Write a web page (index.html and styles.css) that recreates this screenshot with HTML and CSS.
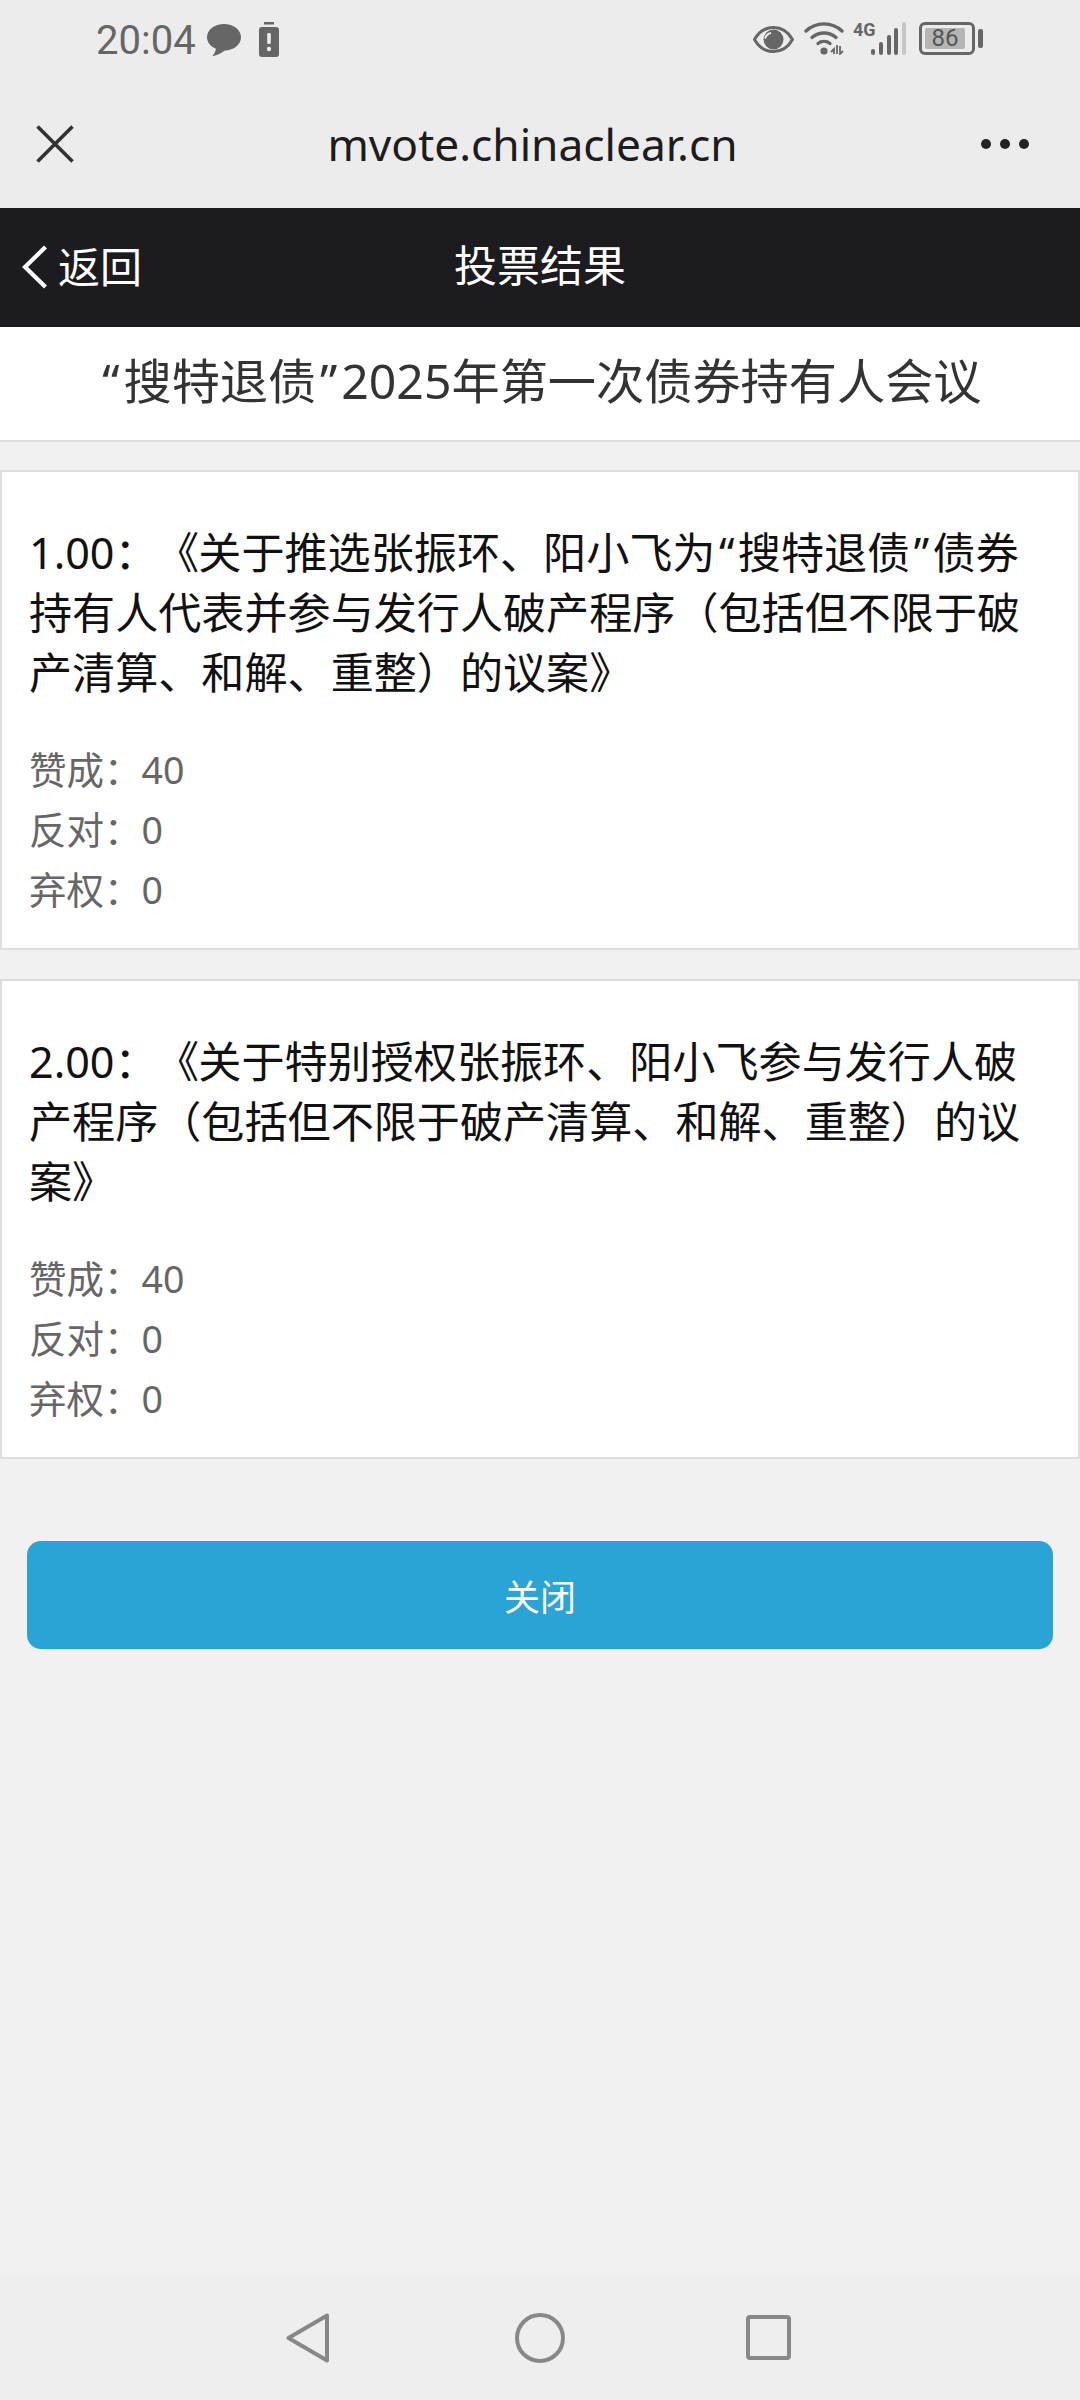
FILE: index.html
```html
<!DOCTYPE html>
<html lang="zh-CN">
<head>
    <meta charset="UTF-8">
    <meta name="viewport" content="width=device-width, initial-scale=1.0">
    <title>投票结果</title>
    <link rel="stylesheet" href="styles.css">
</head>
<body>
    <div class="top-area">
        <div class="status-bar">
            <div class="status-left">
                <span class="time">20:04</span>
                <svg class="ic-chat" width="34" height="32" viewBox="0 0 34 32"><path d="M17 0C7.600 0 0 5.900 0 13.200c0 5 3.600 9.300 8.900 11.500-.2 2.500-1.500 4.900-3 6.600-.4.500 0 .9.600.7 4.400-1 8.800-3.600 11.300-5.600 9.200-.1 16.200-6 16.200-13.200C34 5.900 26.400 0 17 0z" fill="#666"/></svg>
                <svg class="ic-alert" width="20" height="35" viewBox="0 0 20 35"><rect x="5" y="0" width="10" height="2.500" fill="#666"/><rect x="0" y="5" width="20" height="30" rx="3" fill="#666"/><rect x="8.200" y="11" width="3.600" height="11" rx="1.200" fill="#ececec"/><circle cx="10" cy="27" r="2.200" fill="#ececec"/></svg>
            </div>
            <div class="status-right">
                <svg class="ic-eye" width="41" height="27" viewBox="0 0 41 27"><path d="M1.500 13.500C6 5.500 12.500 1.500 20.500 1.500s14.500 4 19 12c-4.500 8-11 12-19 12s-14.500-4-19-12z" fill="none" stroke="#666" stroke-width="3"/><circle cx="20.500" cy="13.500" r="10" fill="#666"/><path d="M12 12.500c1-3 3.200-5 6-5.500" fill="none" stroke="#ececec" stroke-width="2"/></svg>
                <svg class="ic-wifi" width="41" height="33" viewBox="0 0 41 33"><g fill="none" stroke="#666" stroke-width="3.400" stroke-linecap="round"><path d="M2 9C12-.5 28-.5 38 9"/><path d="M8 15.500c7-6 17-6 24 0"/><path d="M14 21.500c3.500-2.800 8.500-2.800 12 0"/></g><circle cx="20" cy="29" r="3.600" fill="#666"/><path d="M30 32v-5l-3 3M33 23v9M36 24v8l3-3" fill="none" stroke="#666" stroke-width="1.800"/></svg>
                <span class="net-type">4G</span>
                <div class="signal">
                    <i class="sig-1"></i><i class="sig-2"></i><i class="sig-3"></i><i class="sig-4"></i><i class="sig-5"></i>
                </div>
                <div class="battery">
                    <div class="battery-body"><span class="battery-fill">86</span></div>
                    <div class="battery-nub"></div>
                </div>
            </div>
        </div>
        <div class="web-bar">
            <div class="web-side">
                <svg class="ic-close" width="38" height="38" viewBox="0 0 38 38"><path d="M1.500 1.500l35 35M36.500 1.500l-35 35" fill="none" stroke="#333" stroke-width="3.600"/></svg>
            </div>
            <span class="web-url">mvote.chinaclear.cn</span>
            <div class="web-side web-side-right">
                <div class="more-dots"><i></i><i></i><i></i></div>
            </div>
        </div>
    </div>

    <div class="header-bar">
        <div class="back-link">
            <svg width="26" height="44" viewBox="0 0 26 44"><path d="M23.500 2L3 22l20.500 20" fill="none" stroke="#fff" stroke-width="4.200"/></svg>
            <span>返回</span>
        </div>
        <div class="header-title">投票结果</div>
    </div>

    <div class="meeting-title"><span class="quote">“</span>搜特退债<span class="quote">”</span>2025年第一次债券持有人会议</div>

    <div class="vote-card">
        <div class="vote-name">
            <div>1.00： <span class="book-open">《</span>关于推选张振环、阳小飞为<span class="quote">“</span>搜特退债<span class="quote">”</span>债券</div>
            <div>持有人代表并参与发行人破产程序（包括但不限于破</div>
            <div>产清算、和解、重整）的议案》</div>
        </div>
        <div class="vote-stats">
            <div>赞成：40</div>
            <div>反对：0</div>
            <div>弃权：0</div>
        </div>
    </div>

    <div class="vote-card">
        <div class="vote-name">
            <div>2.00： <span class="book-open">《</span>关于特别授权张振环、阳小飞参与发行人破</div>
            <div>产程序（包括但不限于破产清算、和解、重整）的议</div>
            <div>案》</div>
        </div>
        <div class="vote-stats">
            <div>赞成：40</div>
            <div>反对：0</div>
            <div>弃权：0</div>
        </div>
    </div>

    <div class="btn-wrap">
        <button class="close-btn">关闭</button>
    </div>

    <div class="nav-bar">
        <svg width="44" height="50" viewBox="0 0 44 50"><path d="M41 2.500L2.500 25 41 47.500z" fill="none" stroke="#888" stroke-width="4" stroke-linejoin="round"/></svg>
        <svg width="50" height="50" viewBox="0 0 50 50"><circle cx="25" cy="25" r="23" fill="none" stroke="#888" stroke-width="4"/></svg>
        <svg width="45" height="45" viewBox="0 0 45 45"><rect x="2" y="2" width="41" height="41" rx="2" fill="none" stroke="#888" stroke-width="4"/></svg>
    </div>
</body>
</html>
```

FILE: styles.css
```css
* {
    box-sizing: border-box;
}
body {
    margin: 0;
    width: 1080px;
    height: 2400px;
    display: flex;
    flex-direction: column;
    background-color: #f1f1f1;
    font-family: "Noto Sans", "Noto Sans CJK SC", sans-serif;
    color: #222;
}
.top-area {
    height: 208px;
    background-color: #ececec;
}
.status-bar {
    height: 80px;
    padding: 22px 97px 0 96px;
    display: flex;
    justify-content: space-between;
    align-items: flex-start;
}
.status-left {
    display: flex;
    align-items: flex-start;
}
.time {
    font-family: Roboto, sans-serif;
    font-size: 40px;
    line-height: 38px;
    color: #666;
    width: 111px;
}
.ic-chat {
    margin-top: 2px;
}
.ic-alert {
    margin-left: 18px;
}
.status-right {
    display: flex;
    align-items: flex-start;
}
.ic-eye {
    margin-top: 4px;
}
.ic-wifi {
    margin-left: 10px;
}
.net-type {
    margin-left: 8px;
    width: 18px;
    font-family: "Liberation Sans Narrow", Roboto, sans-serif;
    font-size: 18px;
    line-height: 16px;
    font-weight: bold;
    color: #666;
}
.signal {
    height: 33px;
    width: 35px;
    display: flex;
    align-items: flex-end;
    justify-content: space-between;
}
.signal i {
    display: block;
    width: 4px;
    background-color: #666;
    border-radius: 2px;
}
.sig-1 { height: 6px; }
.sig-2 { height: 13px; }
.sig-3 { height: 20px; }
.sig-4 { height: 27px; }
.signal .sig-5 { height: 33px; background-color: #c6c6c6; }
.battery {
    margin-left: 13px;
    display: flex;
    align-items: center;
    height: 33px;
}
.battery-body {
    width: 56px;
    height: 33px;
    border: 3px solid #666;
    border-radius: 6px;
    padding: 3px;
}
.battery-fill {
    display: block;
    width: 40px;
    height: 21px;
    background-color: #b5b5b5;
    border-radius: 2px;
    font-family: Roboto, sans-serif;
    font-size: 24px;
    line-height: 21px;
    text-align: center;
    color: #555;
}
.battery-nub {
    margin-left: 3px;
    width: 5px;
    height: 19px;
    background-color: #666;
    border-radius: 2px;
}
.web-bar {
    height: 128px;
    padding: 0 36px;
    display: flex;
    align-items: center;
}
.web-side {
    flex: 1;
    display: flex;
}
.web-side-right {
    justify-content: flex-end;
    padding-right: 15px;
}
.web-url {
    font-size: 44.300px;
    color: #1c1c1c;
}
.more-dots {
    display: flex;
    gap: 9px;
}
.more-dots i {
    display: block;
    width: 10px;
    height: 10px;
    border-radius: 50%;
    background-color: #222;
}
.header-bar {
    height: 119px;
    padding-bottom: 8px;
    background-color: #1c1c20;
    color: #fff;
    position: relative;
    display: flex;
    align-items: center;
    justify-content: center;
}
.back-link {
    position: absolute;
    left: 22px;
    top: 37px;
    display: flex;
    align-items: center;
    gap: 10px;
    font-size: 42px;
    line-height: 44px;
}
.header-title {
    font-size: 43px;
}
.meeting-title {
    height: 115px;
    background-color: #fff;
    border-bottom: 2px solid #ddd;
    text-align: center;
    font-size: 48.200px;
    line-height: 106px;
    color: #333;
}
.quote {
    padding: 0 .08em;
}
.vote-card {
    margin-top: 28px;
    height: 480px;
    background-color: #fff;
    border: 2px solid #ddd;
    padding: 51px 27px 0 27px;
}
.vote-card + .vote-card {
    margin-top: 29px;
}
.vote-name {
    font-size: 43.100px;
    line-height: 60px;
    color: #111;
    white-space: nowrap;
}
.book-open {
    padding-left: 8px;
    font-feature-settings: "palt";
}
.vote-stats {
    margin-top: 37px;
    font-size: 37.500px;
    line-height: 60px;
    color: #666;
}
.btn-wrap {
    padding: 82px 27px 0 27px;
}
.close-btn {
    display: block;
    width: 100%;
    height: 108px;
    border: none;
    border-radius: 14px;
    background-color: #2aa4d7;
    color: #fff;
    font-family: inherit;
    font-size: 36px;
}
.nav-bar {
    margin-top: auto;
    height: 125px;
    background-color: #eeeeee;
    display: flex;
    padding: 38px 0 0 286px;
    align-items: flex-start;
}
.nav-bar svg:nth-child(2) {
    margin-left: 185px;
}
.nav-bar svg:nth-child(3) {
    margin-left: 181px;
    margin-top: 2px;
}
```
